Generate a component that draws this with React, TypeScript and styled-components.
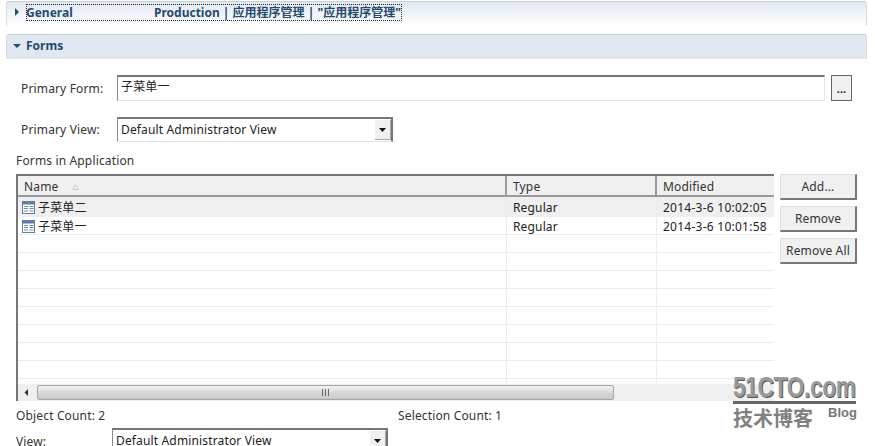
import { createGlobalStyle } from "styled-components";
import styled from "styled-components";

const FONT = '"Noto Sans", "Noto Sans CJK SC", sans-serif';

const GlobalStyle = createGlobalStyle`
    html, body {
        margin: 0;
        background: #fff;
        overflow: hidden;
    }
    body {
        font-family: ${FONT};
        font-size: 12px;
        letter-spacing: 0.15px;
        color: #333;
    }
`;

const Page = styled.main`
    position: relative;
    width: 875px;
    height: 446px;
    overflow: hidden;
    padding-top: 1px;
    box-sizing: border-box;
`;

const SectionBar = styled.div<{ $open?: boolean }>`
    width: 861px;
    height: 25px;
    margin-left: 6px;
    box-sizing: border-box;
    border-top: 1px solid #c3d1d2;
    border-left: 1px solid #d5dfe0;
    border-right: 1px solid #d5dfe0;
    border-radius: 3px 3px 0 0;
    background: ${(p) => (p.$open ? "#e0e7f1" : "linear-gradient(#e2e8f1, #ffffff)")};
    display: flex;
    align-items: center;
    padding-bottom: ${(p) => (p.$open ? "3px" : "4px")};
    font-weight: 700;
    letter-spacing: 0;
    color: #25496f;
    margin-bottom: ${(p) => (p.$open ? "16px" : "8px")};
`;

const Twisty = styled.svg`
    width: 8px;
    height: 8px;
    margin-left: 6px;
    flex: none;
`;

const FocusBox = styled.div`
    display: flex;
    margin-left: 5px;
    height: 17px;
    width: 376px;
    box-sizing: border-box;
    align-items: center;
    outline: 1px dotted #223;
    outline-offset: -1px;
    white-space: nowrap;
    font-size: 12px;
`;

const TitleName = styled.span<{ $width: number }>`
    width: ${(p) => p.$width}px;
    flex: none;
`;

const OpenTitle = styled.span`
    margin-left: 5px;
`;

const FormRow = styled.div`
    display: flex;
    align-items: flex-start;
    margin-left: 21px;
`;

const FieldLabel = styled.label`
    width: 96px;
    height: 26px;
    flex: none;
    line-height: 28px;
`;

const TextBox = styled.div`
    width: 708px;
    height: 26px;
    box-sizing: border-box;
    border: 1px solid #e4e4e4;
    border-top: 2px solid #777;
    border-left: 1px solid #888;
    padding: 2px 3px;
    line-height: 16px;
    color: #222;
`;

const DotsButton = styled.button`
    width: 21px;
    height: 26px;
    margin-left: 6px;
    padding: 0;
    box-sizing: border-box;
    border: 1px solid #666;
    background: #f0f0f0;
    font: 700 11px ${FONT};
    color: #223;
`;

const Select = styled.div`
    width: 276px;
    height: 25px;
    flex: none;
    box-sizing: border-box;
    border: 1px solid #e4e4e4;
    border-top: 2px solid #777;
    border-left: 1px solid #888;
    border-right: 2px solid #777;
    display: flex;
    align-items: center;
    justify-content: space-between;
    padding: 0 0 2px 3px;
    color: #222;
`;

const SelectArrow = styled.span`
    width: 16px;
    height: 20px;
    margin: 2px 0 0;
    box-sizing: border-box;
    background: #f0f0f0;
    border-right: 1px solid #aaa;
    border-bottom: 1px solid #aaa;
    display: flex;
    align-items: center;
    justify-content: center;
`;

const Arrow = styled.svg`
    width: 7px;
    height: 4px;
`;

const ViewRow = styled(FormRow)`
    margin-top: 16px;
    align-items: center;
`;

const BottomViewRow = styled(ViewRow)`
    margin-left: 16px;
    margin-top: 4px;
`;

const PlainLabel = styled.span`
    width: 96px;
    flex: none;
`;

const BottomLabel = styled(PlainLabel)`
    padding-top: 2px;
`;

const ListCaption = styled.div`
    margin: 11px 0 5px 16px;
    line-height: 16px;
`;

const TableArea = styled.div`
    display: flex;
    margin-left: 16px;
`;

const TableFrame = styled.div`
    width: 758px;
    height: 227px;
    box-sizing: border-box;
    border-top: 2px solid #777;
    border-left: 2px solid #777;
    display: flex;
    flex-direction: column;
    overflow: hidden;
`;

const Grid = styled.div`
    flex: 1;
    min-height: 0;
    overflow: hidden;
`;

const Row = styled.div<{ $selected?: boolean; $height?: number }>`
    display: grid;
    grid-template-columns: 489px 150px 117px;
    height: ${(p) => p.$height ?? 18}px;
    box-sizing: border-box;
    border-bottom: ${(p) => (p.$selected ? "0" : "1px solid #ececec")};
    background: ${(p) => (p.$selected ? "#efefef" : "#fff")};
    color: #222;
    & > div {
        padding-bottom: ${(p) => (p.$selected ? "0" : "3px")};
    }
`;

const HeaderRow = styled.div`
    display: grid;
    grid-template-columns: 489px 150px 117px;
    height: 21px;
    box-sizing: border-box;
    border-bottom: 2px solid #999;
    background: #f0f0f0;
`;

const HeaderCell = styled.div`
    display: flex;
    align-items: center;
    padding: 2px 0 0 6px;
    border-right: 2px solid #999;
    box-sizing: border-box;
    &:last-child {
        border-right: 0;
    }
`;

const Cell = styled.div<{ $first?: boolean }>`
    display: flex;
    align-items: center;
    gap: 3px;
    padding-left: ${(p) => (p.$first ? "4px" : "6px")};
    border-right: ${(p) => (p.$first ? "1px solid #ececec" : "0")};
    box-sizing: border-box;
    white-space: nowrap;
    & + & {
        border-right: 1px solid #ececec;
    }
    & + & + & {
        border-right: 0;
    }
`;

const DateText = styled.span`
    letter-spacing: 0.25px;
`;

const SortMark = styled.svg`
    width: 7px;
    height: 6px;
    margin-left: 14px;
`;

const FormIcon = styled.svg`
    width: 13px;
    height: 13px;
    flex: none;
`;

const ScrollBar = styled.div`
    height: 17px;
    flex: none;
    background: #efefef;
    display: flex;
    align-items: center;
`;

const ScrollLeft = styled.svg`
    width: 5px;
    height: 7px;
    margin: 0 8px 0 6px;
    flex: none;
`;

const ScrollThumb = styled.div`
    width: 577px;
    height: 15px;
    box-sizing: border-box;
    border: 1px solid #a4a4a4;
    border-radius: 2px;
    background: linear-gradient(#f2f2f2, #d6d6d6 55%, #c8c8c8);
    display: flex;
    align-items: center;
    justify-content: center;
    gap: 1px;
`;

const Grip = styled.span`
    width: 1px;
    height: 7px;
    background: #666;
    margin-right: 1px;
`;

const ButtonColumn = styled.div`
    display: flex;
    flex-direction: column;
    gap: 6px;
    margin-left: 6px;
`;

const SideButton = styled.button`
    width: 77px;
    height: 26px;
    padding: 0;
    box-sizing: border-box;
    background: #f0f0f0;
    border: 0;
    border-right: 2px solid #777;
    border-bottom: 2px solid #777;
    border-left: 1px solid #ddd;
    border-top: 1px solid #ddd;
    font: 12px ${FONT};
    letter-spacing: 0.15px;
    color: #333;
`;

const CountRow = styled.div`
    display: flex;
    margin: 7px 0 0 16px;
    line-height: 16px;
`;

const CountText = styled.span`
    width: 382px;
    flex: none;
`;

const Watermark = styled.div`
    position: absolute;
    left: 733px;
    top: 374px;
    width: 124px;
    color: #8a8a8a;
`;

const MarkLogo = styled.div`
    font: 700 27px/27px "Liberation Sans", sans-serif;
    letter-spacing: -0.4px;
    transform: scale(0.84, 1.12);
    transform-origin: left;
    white-space: nowrap;
    color: #9a9a9a;
    text-shadow: 1px 1px 0 #555;
`;

const MarkRule = styled.div`
    height: 3px;
    width: 123px;
    background: #666;
`;

const MarkFoot = styled.div`
    display: flex;
    align-items: flex-start;
    justify-content: space-between;
    width: 124px;
    margin-top: 3px;
`;

const MarkCn = styled.span`
    font: 700 20px/22px "Noto Sans CJK SC", sans-serif;
    letter-spacing: 0;
    color: #808080;
`;

const MarkBlog = styled.span`
    font: 700 13px/12px "Liberation Sans", sans-serif;
    letter-spacing: 0;
    color: #777;
`;

const COLS = [
    { name: "子菜单二", type: "Regular", date: "2014-3-6 10:02:05" },
    { name: "子菜单一", type: "Regular", date: "2014-3-6 10:01:58" },
];

function TableGlyph() {
    return (
        <FormIcon viewBox="0 0 13 13">
            <rect x="0.5" y="0.5" width="12" height="12" fill="#fff" stroke="#5f7f9f" />
            <rect x="1" y="1" width="11" height="2.5" fill="#5f7f9f" />
            <path d="M2 5.5h4M7.5 5.5h4M2 7.5h4M7.5 7.5h4M2 10h4M7.5 10h4" stroke="#6f8fa8" />
        </FormIcon>
    );
}

function DownArrow() {
    return (
        <Arrow viewBox="0 0 7 4">
            <path d="M0 0h7L3.5 4z" fill="#111" />
        </Arrow>
    );
}

export default function App() {
    return (
        <Page>
            <GlobalStyle />
            <SectionBar>
                <Twisty viewBox="0 0 8 8">
                    <path d="M2 0l4 4-4 4z" fill="#25496f" />
                </Twisty>
                <FocusBox>
                    <TitleName $width={128}>General</TitleName>
                    <span>Production | 应用程序管理 | "应用程序管理"</span>
                </FocusBox>
            </SectionBar>
            <SectionBar $open>
                <Twisty viewBox="0 0 8 8">
                    <path d="M0 2h8L4 6z" fill="#25496f" />
                </Twisty>
                <OpenTitle>Forms</OpenTitle>
            </SectionBar>

            <FormRow>
                <FieldLabel>Primary Form:</FieldLabel>
                <TextBox>子菜单一</TextBox>
                <DotsButton>...</DotsButton>
            </FormRow>
            <ViewRow>
                <PlainLabel>Primary View:</PlainLabel>
                <Select>
                    Default Administrator View
                    <SelectArrow>
                        <DownArrow />
                    </SelectArrow>
                </Select>
            </ViewRow>

            <ListCaption>Forms in Application</ListCaption>
            <TableArea>
                <TableFrame>
                    <HeaderRow>
                        <HeaderCell>
                            Name
                            <SortMark viewBox="0 0 7 6">
                                <path d="M3.5 0.5L6.5 5.5H0.5z" fill="none" stroke="#ccc" />
                            </SortMark>
                        </HeaderCell>
                        <HeaderCell>Type</HeaderCell>
                        <HeaderCell>Modified</HeaderCell>
                    </HeaderRow>
                    <Grid>
                        {COLS.map((row, i) => (
                            <Row key={row.date} $selected={i === 0} $height={i === 0 ? 20 : 18}>
                                <Cell $first>
                                    <TableGlyph />
                                    {row.name}
                                </Cell>
                                <Cell>{row.type}</Cell>
                                <Cell>
                                    <DateText>{row.date}</DateText>
                                </Cell>
                            </Row>
                        ))}
                        {Array.from({ length: 9 }, (_, i) => (
                            <Row key={i}>
                                <Cell $first />
                                <Cell />
                                <Cell />
                            </Row>
                        ))}
                    </Grid>
                    <ScrollBar>
                        <ScrollLeft viewBox="0 0 5 7">
                            <path d="M4 0v7L0.5 3.5z" fill="#333" />
                        </ScrollLeft>
                        <ScrollThumb>
                            <Grip />
                            <Grip />
                            <Grip />
                        </ScrollThumb>
                    </ScrollBar>
                </TableFrame>
                <ButtonColumn>
                    <SideButton>Add...</SideButton>
                    <SideButton>Remove</SideButton>
                    <SideButton>Remove All</SideButton>
                </ButtonColumn>
            </TableArea>

            <CountRow>
                <CountText>Object Count: 2</CountText>
                <span>Selection Count: 1</span>
            </CountRow>
            <BottomViewRow>
                <BottomLabel>View:</BottomLabel>
                <Select>
                    Default Administrator View
                    <SelectArrow>
                        <DownArrow />
                    </SelectArrow>
                </Select>
            </BottomViewRow>

            <Watermark>
                <MarkLogo>51CTO.com</MarkLogo>
                <MarkRule />
                <MarkFoot>
                    <MarkCn>技术博客</MarkCn>
                    <MarkBlog>Blog</MarkBlog>
                </MarkFoot>
            </Watermark>
        </Page>
    );
}
